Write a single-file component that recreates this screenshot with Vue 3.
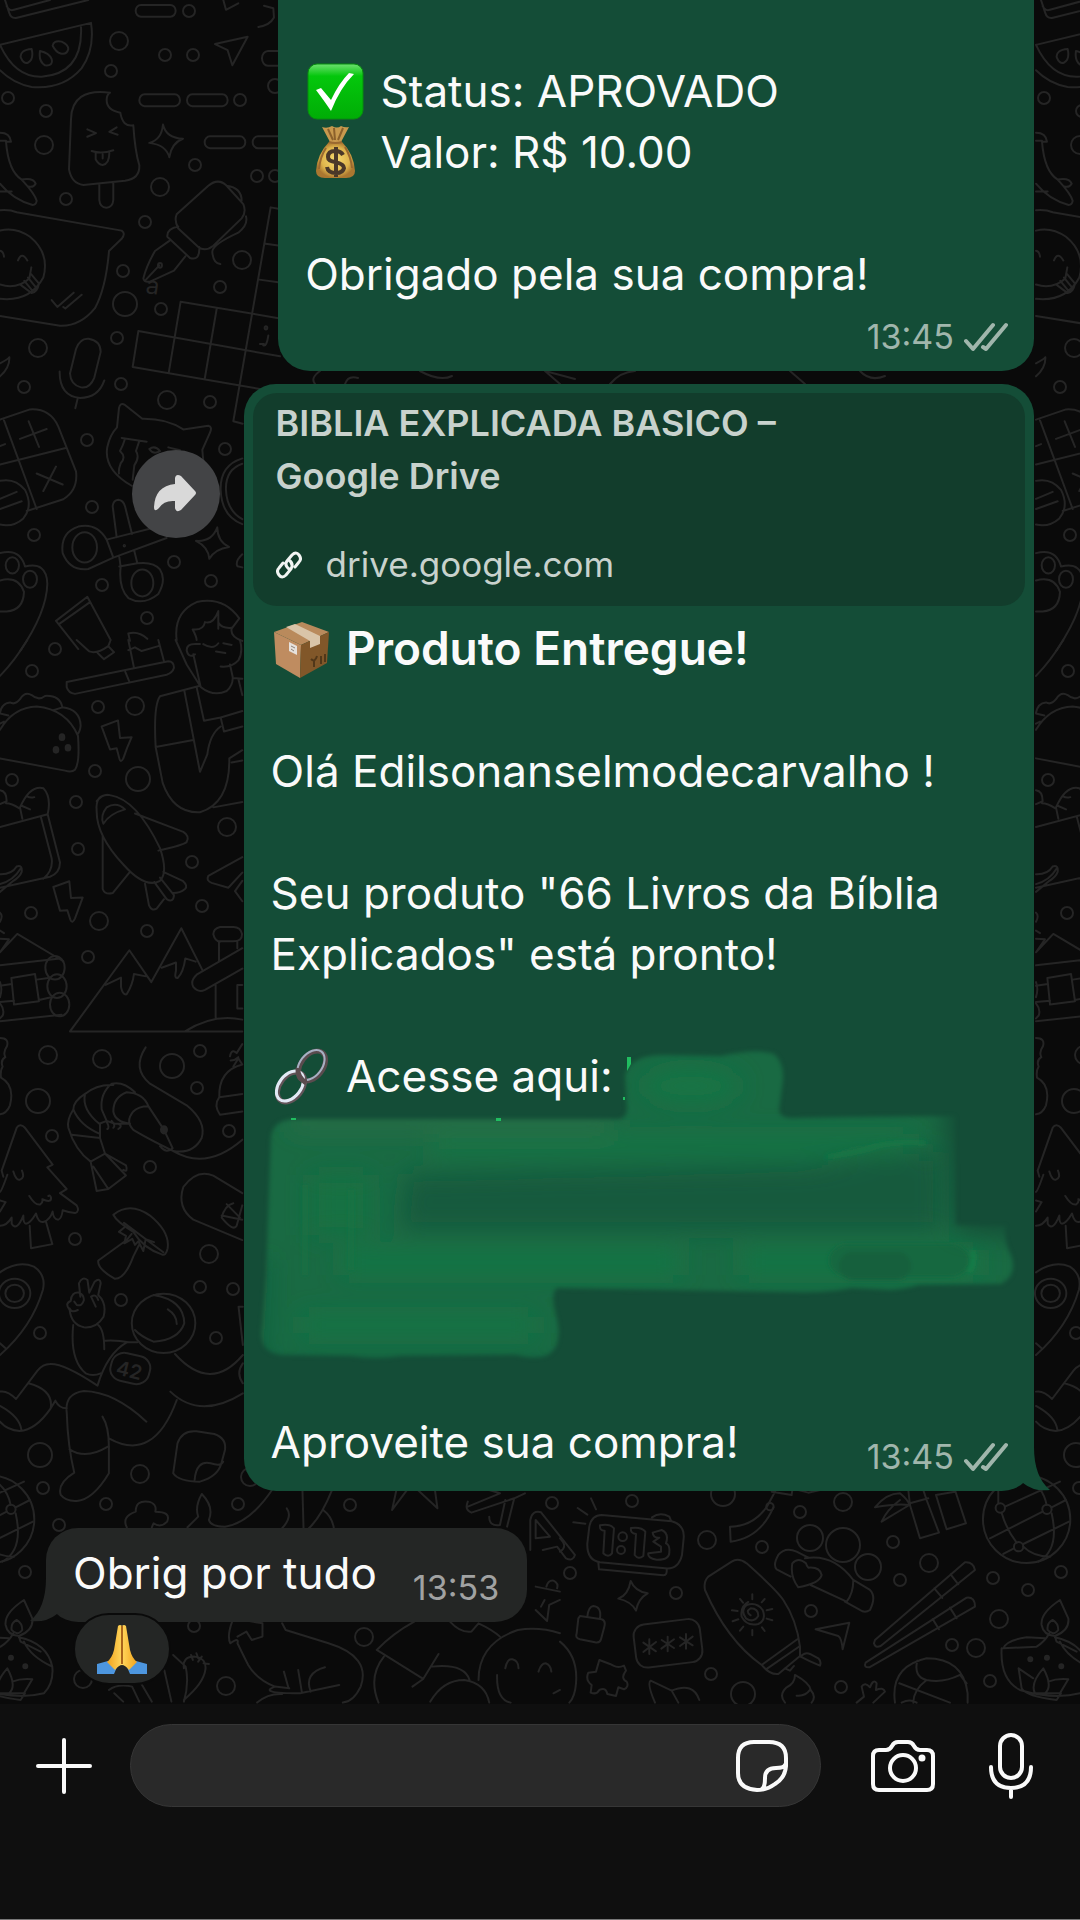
<template>
	<div class='page'>
		<main class='chat'>
			<svg class='wallpaper' aria-hidden='true'>
				<defs>
					<g id='doodles'>
						<circle v-for='(c, i) in dots' :key='i' :cx='c[0]' :cy='c[1]' :r='c[2] || 6' />
						<g transform='scale(.3333 .4082)'>
							<path d='M15 0L28 32Q32 45 48 44L265 0M20 15Q28 28 42 24L150 0M0 110L273 56Q285 120 245 167Q190 220 95 213Q40 205 0 172M0 110Q45 190 125 188Q250 180 243 65M95 120Q60 122 62 140Q70 158 85 153Q102 145 95 120ZM120 125Q115 150 135 160Q160 162 155 145Q148 130 120 125ZM158 112Q160 98 185 102Q205 110 205 120Q200 135 182 131Q168 128 158 112Z' />
							<path d='M330 227Q215 215 213 292L207 415Q215 450 250 453L375 443Q420 438 418 405Q405 370 400 307Q368 312 361 276Q320 270 320 245Q320 232 330 227M298 452V490Q300 508 319 509Q338 508 340 490V448M262 317L288 326L262 335M350 312L328 323L353 330M275 370Q305 378 340 368M287 375V390Q295 403 308 404Q328 402 328 375M308 378V388' />
							<rect x='407' y='12' width='120' height='29' rx='16' /><rect x='418' y='231' width='122' height='29' rx='16' /><rect x='561' y='231' width='122' height='29' rx='16' /><rect x='614' y='334' width='122' height='29' rx='16' /><rect x='758' y='334' width='122' height='29' rx='16' /><rect x='786' y='125' width='100' height='36' rx='18' />
							<path d='M645 108L743 90L697 160L683 123ZM670 0L678 24L715 8M792 14L820 20L822 43Q810 62 775 66M489 305Q498 338 549 340Q515 350 508 385Q498 355 448 350Q485 342 489 305ZM652 1292Q652 1325 687 1340Q645 1345 628 1369Q625 1340 588 1325Q635 1328 652 1292Z' />
							<path d='M0 325Q30 325 33 347H18Q25 420 65 440Q105 475 110 492Q108 502 98 502Q40 490 0 450M65 440Q100 435 107 450Q100 460 86 457M0 469H35M0 345H18' />
							<path d='M0 515Q30 513 50 520L365 565Q378 572 365 585L327 615Q318 705 285 755Q240 800 180 798L0 774M0 565Q45 555 90 580Q150 620 130 680Q90 740 0 732M0 614Q10 615 12 629M54 638Q65 615 82 638M0 697Q50 710 88 682L94 655M94 672L117 695Q112 715 95 718L62 698M84 680L106 702M73 688L97 712M155 735L172 752L221 717M190 752L196 756L245 722' />
							<path d='M530 525L625 455Q655 435 680 455L730 500Q740 520 725 535L640 602Q615 618 595 605L535 560Q522 540 530 525ZM535 555Q500 560 502 580L570 632Q600 640 598 605M508 590L465 615Q440 650 430 682Q432 692 450 690L522 663L556 628M438 685L478 650M680 455Q725 460 725 492M738 530Q745 550 715 570Q635 600 637 618Q640 645 661 647' />
							<path d='M415 811L398 899L780 953M542 739L506 914M415 811L840 873M542 739L840 780M650 757L614 929M812 508L700 1032L728 1038M812 508L840 512M797 597L840 602M778 685L840 692M790 846Q800 850 805 822M780 843H792' />
							<circle cx='480' cy='650' r='6' /><circle cx='798' cy='803' r='4' />
							<path d='M210 915L228 855Q240 828 266 830Q302 835 302 862L283 925Q270 952 243 949Q212 943 210 915ZM179 910Q178 970 240 975Q295 975 313 932M233 976L226 1000M0 890Q25 880 28 875Q30 900 0 922' />
							<path d='M0 1028L90 1003Q150 1000 175 1045L228 1155Q235 1200 190 1223L80 1252M12 1030L110 1247M0 1138L200 1097M60 1075L140 1051M86 1032L117 1095M110 1160L188 1187M168 1143L130 1203M0 1178Q45 1170 75 1200Q100 1240 70 1270Q40 1292 0 1285M0 1222L50 1205M0 1247L65 1228M0 1093L15 1088' />
							<path d='M395 1190Q310 1150 322 1095Q330 1065 351 1047L357 1000Q360 985 375 992L427 1026Q500 1025 550 1052L625 1043Q638 1045 630 1060L607 1102L610 1130M365 1073L440 1082M375 1075Q370 1090 360 1105Q380 1120 362 1135Q355 1150 357 1160M418 1080L408 1105Q420 1120 403 1140L398 1175M448 1100Q465 1090 480 1105Q460 1115 448 1100M505 1096L540 1103M727 1123Q660 1140 662 1200Q665 1265 727 1284M727 1136Q676 1150 678 1200Q680 1250 727 1272' />
							<circle cx='254' cy='1341' r='37' /><circle cx='427' cy='1428' r='33' /><circle cx='373' cy='1337' r='2' />
							<path d='M320 1322Q290 1280 235 1290Q180 1305 188 1355Q210 1400 265 1394L340 1366L320 1322L500 1285M340 1366L500 1318M350 1316L338 1240Q340 1225 355 1224Q370 1225 375 1240L396 1308M358 1365L362 1388Q355 1440 385 1465Q430 1485 475 1455Q500 1420 480 1395Q460 1375 412 1380L358 1388M403 1350L412 1380' />
							<circle cx='37' cy='1385' r='20' /><circle cx='90' cy='1419' r='21' />
							<path d='M0 1355Q60 1342 75 1388Q140 1375 142 1430Q140 1500 60 1595M0 1422Q55 1410 72 1450Q70 1495 20 1498H0M168 1521L262 1462L330 1565M168 1521L235 1590M180 1527L270 1475M727 1358Q705 1375 712 1387L727 1390M530 1568Q520 1500 590 1475Q670 1460 718 1515L695 1540Q690 1560 727 1570M655 1540V1497Q640 1530 615 1524Q610 1545 578 1542Q590 1560 590 1568M655 1525Q665 1540 695 1538M390 1570L385 1552Q415 1545 442 1565' />
						</g>
						<g transform='translate(0 640) scale(.3333 .4082)'>
							<path d='M82 0Q45 50 0 88M230 0L268 28Q290 35 325 15M332 0L325 15L342 30L312 47L293 32M385 0L402 68M475 0L492 52M385 25L405 18L425 27L475 15M200 103L505 52Q522 52 522 68Q518 80 500 85L225 132Q205 130 200 115ZM376 78L388 102M527 0L560 60L600 112M580 35L602 115Q640 140 680 125Q700 110 698 90L690 60M560 25Q560 10 585 10H600M560 25Q565 45 585 35M720 0Q730 30 715 50Q695 68 662 65M648 28L676 32M610 10Q640 25 655 8M670 8L695 12M700 93L727 95M600 112L480 138Q460 160 467 262L580 245M590 116L612 198L662 190M553 124L600 323L622 280Q630 230 662 212M467 262L488 350Q520 425 600 422Q690 400 688 290L727 270M662 190L727 174M662 190L672 224L727 212M640 410L727 397M695 300L727 295M715 95L727 135' />
							<path d='M0 220Q40 165 110 163Q200 170 234 235Q240 300 225 318Q215 325 195 320L0 290M0 178Q5 155 30 153Q45 160 60 145Q75 125 95 135Q115 150 135 137Q180 135 187 165Q240 170 242 210Q240 225 233 230M160 172L187 165M0 180L25 185M0 205L12 200' />
							<circle cx='186' cy='238' r='7' class='solid' /><circle cx='168' cy='269' r='7' class='solid' /><circle cx='204' cy='264' r='7' class='solid' />
							<path d='M305 212L354 197L360 240L395 238Q380 265 370 290Q362 303 358 290L350 265L330 268ZM160 605L208 591L213 632L248 631Q235 660 225 682Q217 697 211 685L202 662L180 663ZM0 458L143 427L180 545Q180 570 150 580L0 607M122 432L155 535Q160 565 130 585M60 410L67 438M60 410Q90 355 130 363Q155 385 143 427M82 383Q90 388 103 385M65 406L90 415M0 368Q20 370 20 395L0 402M18 400Q35 400 57 412M0 574Q35 575 50 555Q68 550 65 568Q60 580 40 590L0 617M0 598Q40 590 62 560' />
							<path d='M290 420Q285 375 330 380Q410 390 480 510Q505 570 480 590Q435 610 370 550Q290 480 290 420ZM290 395Q310 375 330 380M310 450Q300 430 320 410Q350 395 375 415Q330 425 310 450ZM405 425L550 470Q570 480 560 495Q550 503 475 516M308 480V610Q315 625 338 620L388 570M435 597L447 650Q455 665 470 658L492 635M490 568L548 590Q565 603 555 610Q540 620 520 620M463 593L500 635Q520 645 522 625L480 582' />
							<path d='M727 532L625 578Q618 590 635 595L685 607L727 570M727 590L705 615L727 640M0 668Q10 675 0 690M0 712L12 718M0 732L27 733L0 765L52 720L190 787M0 797L180 780M0 847L35 843M0 887L42 884M0 934L185 918M110 832L145 828M117 882L150 876M34 828L105 818L117 885L42 893ZM0 838Q8 855 0 875M0 890Q15 905 8 920L0 927' />
							<circle cx='165' cy='803' r='29' /><circle cx='171' cy='848' r='29' /><circle cx='179' cy='893' r='29' />
							<path d='M727 959H210L388 760L454 838L544 706L607 808M317 845L363 827V850Q368 870 380 868Q398 845 402 818L438 824M485 803L528 790V810Q522 830 533 828Q550 815 556 780L587 788M727 755L590 820Q570 835 580 850Q595 865 615 857L727 805M647 845V925M657 785V740M712 755V740M655 738H700Q727 738 726 720Q722 703 700 703H660Q640 707 640 721Q645 738 660 739M727 845H712V903H727M555 959Q640 915 727 930' />
							<path d='M0 975Q28 975 21 995Q8 1010 16 1022Q0 1030 8 1045Q0 1055 3 1072Q45 1090 30 1140Q20 1160 0 1162M10 1315L5 1300L50 1195Q60 1182 75 1195L158 1285L142 1292L200 1345L180 1355L230 1385Q240 1400 225 1404Q205 1402 188 1397Q185 1418 175 1420Q160 1420 158 1400Q150 1420 132 1425Q115 1430 108 1405Q90 1430 78 1430Q70 1430 70 1410Q50 1450 35 1430V1415Q20 1435 0 1435M22 1310Q5 1350 0 1352M0 1373L17 1377L0 1400M40 1302Q48 1325 60 1322Q75 1318 66 1300M88 1362Q105 1385 120 1383Q130 1378 127 1370Q155 1380 153 1366Q150 1358 145 1362M89 1435L93 1490L157 1480L138 1425' />
							<path d='M437 998Q395 1050 450 1087L560 1140Q620 1180 605 1220Q580 1260 520 1252Q440 1220 400 1200Q375 1180 400 1155Q415 1142 445 1142L492 1200L518 1245Q500 1260 480 1240M445 1142Q430 1110 380 1108Q340 1120 340 1155Q345 1180 390 1185M405 1108Q370 1080 335 1087Q300 1110 305 1150L320 1178M340 1090Q290 1088 255 1112Q245 1150 298 1185M255 1112Q220 1130 220 1150Q240 1190 300 1210M220 1150Q200 1175 205 1195Q225 1250 272 1278L315 1258L300 1220L215 1212M298 1185L320 1178L345 1185L385 1185M300 1185V1220M320 1180Q330 1195 322 1198M335 1178Q348 1190 340 1195M355 1185Q370 1190 355 1198M272 1278L290 1350L325 1345L378 1312L315 1258L378 1287Q385 1305 370 1298M280 1290L325 1345M520 1252Q620 1300 727 1224' />
							<circle cx='492' cy='1200' r='9' class='solid' />
							<path d='M727 1355L640 1312Q590 1295 550 1340Q530 1390 580 1420L727 1470M727 1040Q655 1055 658 1120L727 1112M658 1120Q640 1140 660 1163L727 1155M690 1020Q695 1000 710 1012L727 990M692 1030Q705 1030 715 1022M700 1045L715 1025L727 1040M700 1380Q675 1385 665 1415Q700 1450 710 1435L727 1385M680 1382L720 1415M665 1410L727 1420' />
							<path d='M340 1408Q390 1375 450 1410Q510 1450 503 1490Q498 1510 485 1505Q430 1490 400 1450Q350 1425 340 1408ZM372 1428L490 1500M372 1440L357 1450L378 1460L373 1478L397 1467L405 1482L415 1473L430 1497L437 1468L462 1475M395 1455L380 1470L295 1520Q290 1540 345 1565Q375 1565 400 1510L417 1482' />
						</g>
						<g transform='translate(0 1200) scale(.3571 .3333)'>
							<circle cx='41' cy='280' r='26' /><circle cx='41' cy='280' r='44' /><circle cx='458' cy='370' r='89' />
							<path d='M0 217Q50 180 95 200Q130 225 120 270Q90 380 0 465M0 430L18 447' />
							<path d='M225 290L221 250Q230 228 245 240L250 278L265 245Q280 232 282 250L275 285Q300 310 290 350Q270 385 235 382Q200 375 195 330Q180 310 198 303Q200 275 222 278Q235 285 235 300Q230 320 215 315L208 305M218 330Q200 340 195 325M255 290Q270 280 275 300M255 290L268 320M205 375Q195 480 240 520Q260 530 282 520M275 375Q292 390 292 448M295 422Q330 420 360 427H385M355 427Q300 460 273 557Q180 490 140 492Q120 492 105 512L45 597Q20 570 0 575M80 550Q150 570 142 625Q100 690 55 693Q20 690 0 665M0 618Q55 650 60 690M142 625L155 602Q165 625 187 625M410 665Q320 575 235 573Q180 580 187 640Q190 740 208 818Q160 850 170 885Q185 905 215 903Q260 900 305 820V740Q305 680 287 650M195 748Q240 780 302 740M305 715Q430 790 495 600M477 575Q560 660 680 580M490 462Q590 580 680 465M680 320H668L680 435M680 490Q660 520 680 550M430 285Q515 300 516 370Q500 420 430 425Q395 410 378 390M470 328Q495 345 495 372' />
							<rect x='310' y='463' width='110' height='85' rx='36' transform='rotate(14 365 505)' />
							<path d='M485 820L497 730Q510 690 550 694L600 702Q635 715 630 750L620 790Q610 830 560 845Q500 845 485 820ZM545 840Q550 780 590 790Q620 800 625 785' />
							<path d='M355 982Q340 950 380 935Q380 900 415 905Q440 910 435 935Q480 935 468 965Q450 985 430 970L425 982M525 982L555 950Q545 920 565 882Q600 920 585 960Q590 980 630 980Q700 970 765 865M847 870L850 985M930 870Q900 950 865 985M905 930Q930 950 935 985M803 925Q820 950 790 985M1098 930L1110 870M1098 930L1140 870M1170 870L1225 925L1218 870M1310 905Q1300 930 1320 938L1440 895L1420 980M1310 920L1400 880L1370 870M1370 950Q1370 980 1400 975L1415 900M1440 895L1470 880M1485 1050V960Q1490 930 1515 937L1610 1065Q1605 1085 1585 1075L1560 1040L1520 1050M1500 960V1015L1540 1010Z' />
							<path d='M485 1365L520 1400Q530 1450 515 1505M515 1405Q510 1370 545 1370Q580 1375 575 1410Q570 1450 515 1500M550 1360L555 1375M535 1365L540 1380M565 1370L555 1385M570 1390L585 1392M460 1410L480 1505M305 1470Q330 1450 370 1460L390 1505M320 1480L345 1505M395 1450L425 1505M650 1265Q635 1310 645 1330Q670 1310 665 1330Q690 1385 695 1395Q720 1440 770 1460L810 1465M665 1310L690 1295L705 1320L735 1310V1270L690 1262M790 1270L800 1290L920 1330Q1040 1370 1010 1460Q990 1505 960 1508M795 1415L808 1465M835 1410L845 1475M770 1460Q720 1480 840 1480L950 1455M910 1402Q850 1420 870 1475M720 1508Q750 1480 790 1482M1160 1265Q1100 1300 1055 1350L1185 1437L1228 1362M1075 1370Q1030 1430 1060 1508M1185 1437L1155 1460M1210 1400Q1300 1390 1315 1440M1205 1505Q1240 1440 1300 1440Q1360 1450 1370 1508M1260 1265Q1290 1300 1320 1295L1340 1270Q1380 1290 1400 1310M1568 1300Q1510 1280 1450 1290Q1340 1330 1340 1440M1415 1405Q1420 1375 1435 1378Q1452 1382 1452 1405M1508 1415Q1515 1390 1528 1390Q1542 1395 1544 1415M1392 1425Q1390 1500 1430 1508M1568 1470L1550 1480' />
							<path d='M1500 1160L1568 1175M1500 1230L1532 1263L1538 1215L1568 1200M1515 1220L1525 1200M1530 1160Q1535 1140 1550 1142Q1565 1150 1560 1165' />
						</g>
						<g transform='translate(560 1400) scale(.3333)'>
							<path d='M93 295L108 328M53 324L82 344M40 367L76 371M125 345L335 364Q375 375 371 415L366 465Q355 510 315 505L120 487Q80 480 82 430L88 380Q95 345 125 345ZM276 352Q300 335 328 350L333 362M115 488L117 508L310 526Q322 525 320 508' />
							<path d='M120 376Q118 392 134 392L130 460Q145 475 156 460L162 385Q150 370 120 376ZM213 384Q210 400 228 402L224 465Q235 480 250 468L256 395Q245 380 213 384ZM278 398Q280 415 298 413L280 425L303 440V455L265 460Q262 475 290 479Q330 480 328 455Q330 435 318 430Q328 400 305 390Z' />
							<circle cx='188' cy='410' r='13' /><circle cx='183' cy='450' r='12' />
							<path d='M212 543Q225 575 263 580Q235 595 228 632Q215 605 175 596Q205 585 212 543ZM60 648L125 658Q138 662 133 680L123 718Q120 730 105 727L60 718Q45 714 50 700L55 655ZM82 650Q85 620 100 618Q125 620 120 655M118 780L150 792L160 797Q175 805 192 797L198 812Q180 835 200 845Q208 860 192 868L175 862L168 888L142 882Q138 860 118 870Q110 885 92 878L95 855Q75 840 85 818L108 815ZM285 908Q260 850 272 842L335 872Q400 845 418 900M335 872L355 908M0 725Q55 770 48 850Q45 890 28 908M0 415Q25 440 0 455' />
							<rect x='224' y='665' width='200' height='130' rx='34' transform='rotate(-7 324 730)' />
							<path d='M268 718V762M250 728L288 754M288 726L250 756M323 710V754M305 720L342 744M342 718L304 746M378 702V746M360 712L398 736M398 710L360 738' />
							<path d='M445 530L515 485Q535 472 560 490Q650 570 670 600Q710 660 720 740V768L655 822Q630 825 605 795Q500 720 435 570Q430 545 445 530ZM605 795L712 718M618 808L720 738M722 770Q735 755 750 762L775 775Q785 785 780 797Q750 785 722 770M675 805L690 812L702 798M577 583V598M577 690V706M516 631L533 633M620 656L637 661M540 597L549 608M614 597L605 607M540 692L550 680M614 693L606 682M637 627L620 631M518 664L535 658M572 646Q555 635 572 625Q595 625 595 648Q580 670 558 655Q540 630 560 615Q590 605 608 630Q620 660 595 672Q560 680 545 650Q540 620 565 606' />
							<path d='M692 530L650 508Q638 495 655 465Q675 440 710 455L745 473M715 562Q690 530 697 490Q715 470 738 490Q740 498 745 503Q780 500 785 525Q780 550 715 562ZM735 475Q820 460 880 540Q880 580 860 605L752 555M880 540L930 570Q950 590 930 630Q915 640 900 630L855 605M645 275L622 318Q580 380 510 380L512 425Q600 415 640 322M635 275L695 285L697 270M715 270L745 278L780 270' />
							<circle cx='630' cy='320' r='11' />
							<path d='M767 688L868 668L848 748Q845 715 835 708ZM945 322Q980 280 1020 280Q1045 300 1048 315Q1010 310 945 322ZM965 365Q980 330 1020 300M965 365L1048 315M1045 270L1050 315L1080 415L1137 398L1100 300L1090 270M1050 310L1105 295M1128 285L1160 388L1218 370L1185 270M1128 285L1185 275' />
							<path d='M945 720L1215 487Q1240 485 1245 510L962 738Q945 745 942 730ZM1172 523L1195 553M1123 565L1147 594M917 788L1220 593Q1245 590 1245 620L928 802Q910 803 917 788ZM1170 623L1190 655M1118 657L1137 688' />
							<circle cx='1400' cy='358' r='131' /><circle cx='1321' cy='324' r='14' /><circle cx='1461' cy='328' r='14' /><circle cx='1376' cy='440' r='14' />
							<path d='M1335 320L1500 245M1475 322L1518 300M1290 415L1448 335M1390 432L1527 365M1330 462L1362 445M1315 270V310M1325 338Q1340 390 1370 428M1475 340Q1500 450 1435 485M1390 440Q1420 470 1470 470M1400 235Q1450 260 1460 315' />
							<path d='M1005 908Q990 800 1100 775Q1210 775 1223 880V908M1072 782Q1060 830 1100 840Q1150 850 1200 825L1220 850M1100 840Q1060 870 1060 908M1018 850L1170 908M1025 908Q1050 895 1070 908M890 908L912 890L905 860Q915 845 930 862Q940 835 950 850L948 870Q970 860 975 875L940 908M705 825Q750 850 752 870Q770 890 755 908M705 825Q705 850 680 862Q655 885 675 908M710 887Q735 890 750 870' />
							<path d='M1500 600Q1440 640 1445 675Q1450 705 1485 708Q1530 690 1525 655ZM1478 660Q1460 670 1463 690Q1480 710 1495 690Q1495 670 1478 660ZM1468 700Q1455 725 1430 740L1330 745Q1340 720 1400 712L1455 715M1485 710L1490 725L1550 755M1325 745Q1320 840 1380 870Q1480 900 1560 880M1376 805L1385 865Q1400 890 1490 900L1503 880M1376 805L1420 835M1450 805Q1410 850 1425 880H1455Q1480 860 1450 805ZM1525 838Q1490 835 1465 845M1525 838L1500 880L1455 880M1485 712Q1570 730 1585 800Q1590 850 1560 880M1500 725Q1520 770 1585 800' />
							<circle cx='1411' cy='778' r='6' class='solid' /><circle cx='1461' cy='773' r='6' class='solid' /><circle cx='1504' cy='799' r='6' class='solid' />
						</g>
						<text x='145' y='293' transform='rotate(8 145 293)'>a</text>
						<text x='115' y='1374' transform='rotate(14 115 1374)' class='tag'>42</text>
						<path d='M320 371Q310 378 315 384M345 384Q348 375 358 378M420 371Q440 382 452 376M560 384L545 371L575 379M610 384Q620 372 635 371M790 371L805 384M860 371Q870 382 885 376' />
					</g>
				</defs>
				<use href='#doodles' />
				<use href='#doodles' x='1036' />
				<use href='#doodles' x='-1036' />
			</svg>

			<section class='message sent'>
				<div class='bubble first'>
					<div class='text'>
						<p>
							<svg class='emoji' viewBox='0 0 57 57' role='img' aria-label='✅'>
								<defs><linearGradient id='check' x2='0' y2='1'><stop stop-color='#6de070' /><stop offset='.22' stop-color='#04c70c' /><stop offset='1' stop-color='#00ad06' /></linearGradient></defs>
								<rect x='1' y='1' width='55' height='55' rx='9' fill='url(#check)' stroke='#078e0e' />
								<path d='M9 27L14 25L24 37Q32 20 42 10L47 11Q33 25 24 48Q18 39 9 27Z' fill='#fff' />
							</svg>
							Status: APROVADO<br>
							<svg class='emoji' viewBox='0 0 57 57' role='img' aria-label='💰'>
								<defs><radialGradient id='bag'><stop stop-color='#f6db70' /><stop offset='.7' stop-color='#dfb54c' /><stop offset='1' stop-color='#ab7730' /></radialGradient></defs>
								<path d='M23 18L15 3Q20 5 25 2Q30 5 34 2Q38 4 42 3L34 18Z' fill='#c8994e' />
								<path d='M21 5L26 16M27 4L28 16M36 4L31 16' stroke='#8b602b' stroke-width='2' fill='none' />
								<path d='M22 18H35Q47 30 48 47Q48 54 39 54H18Q9 54 9 47Q10 30 22 18Z' fill='url(#bag)' />
								<path d='M22 18Q28 20 35 18M19 24Q13 33 12 45M38 23Q44 33 45 44' stroke='#9a6930' stroke-width='2' fill='none' />
								<path d='M36 31Q34 27 28 27Q21 27 21 33Q21 37 28 38Q37 40 37 44Q36 49 29 49Q21 49 20 43M29 23V53' stroke='#4a3829' stroke-width='4' fill='none' />
							</svg>
							Valor: R$ 10.00
						</p>
						<p>Obrigado pela sua compra!</p>
					</div>
					<div class='meta'>
						<time>13:45</time>
						<svg class='ticks' viewBox='0 0 44 30' aria-hidden='true'><path d='M2 19L9 27L29 3M19 25L22 27L42 3' /></svg>
					</div>
				</div>
			</section>

			<section class='message sent'>
				<button class='forward' type='button' aria-label='Encaminhar'>
					<svg viewBox='0 0 88 88'><path d='M43 34V28Q44 23 49 26L63 41Q65 43 63 45L49 60Q44 63 43 58V51Q32 50 27 58Q22 63 22 57Q23 36 43 34Z' /></svg>
				</button>
				<div class='bubble second'>
					<a class='preview' href='#'>
						<strong>BIBLIA EXPLICADA BASICO –<br>Google Drive</strong>
						<span class='host'>
							<svg viewBox='0 0 26 28' aria-hidden='true'><path d='M13 18Q8 14 11 10L16 4Q20 0 23 4Q26 8 23 11L19 16M13 9Q18 13 15 18L10 24Q6 28 3 24Q0 20 3 17L7 12' /></svg>
							drive.google.com
						</span>
					</a>
					<div class='text'>
						<p>
							<svg class='emoji' viewBox='0 0 57 57' role='img' aria-label='📦'>
								<path d='M1 11L29 1L56 11L28 24Z' fill='#b98a5c' />
								<path d='M1 11L28 24L27 57L3 43Z' fill='#bf8c60' />
								<path d='M28 24L56 11L54 42L27 57Z' fill='#815729' />
								<path d='M13 6L22 3L47 15V23L37 27V20Z' fill='#d9c4a8' />
								<path d='M16 21L24 25V34L16 30Z' fill='#e6e1dc' />
								<path d='M18 25L22 27M18 28L21 30' stroke='#8b8179' />
								<path d='M38 38Q42 42 44 35M41 39V46M48 35V43M52 33V41' stroke='#513719' stroke-width='2' fill='none' />
							</svg> <b>Produto Entregue!</b>
						</p>
						<p>Olá Edilsonanselmodecarvalho !</p>
						<p>Seu produto "66 Livros da Bíblia<br>Explicados" está pronto!</p>
						<div class='access'>
							<p>
								<svg class='emoji' viewBox='0 0 57 57' role='img' aria-label='🔗'>
									<g fill='none'>
										<ellipse cx='39' cy='18' rx='11' ry='17' transform='rotate(38 39 18)' stroke='#5a4b4e' stroke-width='5' />
										<ellipse cx='38' cy='17' rx='11' ry='17' transform='rotate(38 38 17)' stroke='#a7b0c3' stroke-width='2' />
										<ellipse cx='18' cy='39' rx='11' ry='17' transform='rotate(38 18 39)' stroke='#625459' stroke-width='5' />
										<ellipse cx='17' cy='38' rx='11' ry='17' transform='rotate(38 17 38)' stroke='#e2e9f5' stroke-width='3' />
										<path d='M25 20Q24 29 33 35' stroke='#5a4b4e' stroke-width='5' />
									</g>
								</svg>
								Acesse aqui:
							</p>
							<svg class='smudge' viewBox='0 0 800 340' aria-hidden='true'>
								<defs>
									<filter id='edge'><feGaussianBlur stdDeviation='2' /></filter>
									<filter id='soft' x='-50%' y='-150%' width='200%' height='400%'><feGaussianBlur stdDeviation='12' /></filter>
									<mask id='shape'>
										<path d='M42 89H362Q375 91 376 80L374 45Q380 24 415 25L470 26Q505 18 523 24Q533 32 532 50L528 80Q529 88 540 88L600 87L705 86V195H755Q752 210 760 225Q767 245 750 254L668 255Q655 259 640 260L600 258Q580 263 540 262L306 258Q299 263 305 285Q313 315 297 325Q285 330 265 325L150 326Q125 330 100 326L30 325Q6 322 11 295L15 245L20 105Q24 90 42 89Z' fill='#fff' filter='url(#edge)' />
										<path d='M688 40H820V212L705 200Z' fill='#000' filter='url(#soft)' />
									</mask>
								</defs>
								<g mask='url(#shape)'>
									<rect width='800' height='340' fill='#196a43' />
									<g filter='url(#soft)'>
										<rect x='40' y='88' width='320' height='10' fill='#356d4a' />
										<ellipse cx='440' cy='56' rx='50' ry='18' fill='#187444' />
										<rect x='180' y='105' width='480' height='20' fill='#177545' />
										<path d='M155 144Q350 140 560 136Q620 124 690 122V200H150Z' fill='#165a3c' />
										<rect x='60' y='145' width='60' height='60' fill='#197143' />
										<rect x='90' y='220' width='340' height='25' fill='#187645' />
										<rect x='490' y='220' width='240' height='25' fill='#187644' />
										<rect x='50' y='285' width='235' height='20' fill='#187544' />
										<path d='M14 230L8 340H310' stroke='#175a3c' stroke-width='8' fill='none' />
									</g>
									<g filter='url(#edge)'>
										<path d='M575 127Q610 122 625 116Q645 111 675 113' stroke='#177a47' stroke-width='3' fill='none' />
										<rect x='578' y='214' width='140' height='33' rx='20' fill='#196840' />
										<rect x='588' y='222' width='72' height='28' rx='14' fill='#17603d' />
										<path d='M54 155V245M100 160V240' stroke='#187245' stroke-width='3' />
										<path d='M722 220Q724 235 718 242' stroke='#198049' stroke-width='4' fill='none' />
									</g>
								</g>
								<path d='M376 27H380V34L376 41ZM372 67H374V70H372ZM245 88H250V91H245ZM40 88H45V90H40Z' fill='#20bd60' />
							</svg>
						</div>
					</div>
					<div class='closing text'>
						<p>Aproveite sua compra!</p>
						<div class='meta'>
							<time>13:45</time>
							<svg class='ticks' viewBox='0 0 44 30' aria-hidden='true'><path d='M2 19L9 27L29 3M19 25L22 27L42 3' /></svg>
						</div>
					</div>
					<svg class='tail' viewBox='0 0 34 44' aria-hidden='true'><path d='M0 34V0H18Q18 30 34 43Q18 45 7 36Z' /></svg>
				</div>
			</section>

			<section class='message received'>
				<div class='bubble incoming'>
					<p>Obrig por tudo</p>
					<div class='meta'><time>13:53</time></div>
					<svg class='tail' viewBox='0 0 34 44' aria-hidden='true'><path d='M34 34V0H16Q16 30 0 43Q16 45 27 36Z' /></svg>
				</div>
				<button class='reaction' type='button' aria-label='Reação 🙏'>
					<svg viewBox='0 0 50 50'>
						<defs><linearGradient id='hand'><stop stop-color='#f1a31f' /><stop offset='.5' stop-color='#ffd65b' /><stop offset='1' stop-color='#f3a41d' /></linearGradient></defs>
						<path d='M11 37L0 40V50H17L20 43ZM39 37L50 40V50H33L30 43Z' fill='#4d96df' />
						<path d='M21 2Q23 0 25 2Q27 0 29 2L33 26Q35 34 40 38L32 46Q28 41 25 41Q22 41 18 46L10 38Q15 34 17 26Z' fill='url(#hand)' />
						<path d='M25 2V40' stroke='#aa651b' stroke-width='2' />
					</svg>
				</button>
			</section>
		</main>

		<form class='composer' @submit.prevent>
			<button class='plus' type='button' aria-label='Anexar'>
				<svg viewBox='0 0 56 56'><path d='M28 2V54M2 28H54' /></svg>
			</button>
			<div class='field'>
				<input v-model='draft' type='text' aria-label='Mensagem'>
				<button class='sticker' type='button' aria-label='Figurinhas'>
					<svg viewBox='0 0 52 52'><path d='M18 2H33Q50 2 50 18V26Q49 38 39 44Q31 50 21 50Q2 49 2 33V18Q2 2 18 2ZM26 49Q29 47 29 38Q29 28 40 28Q48 28 49 25' /></svg>
				</button>
			</div>
			<button class='camera' type='button' aria-label='Câmera'>
				<svg viewBox='0 0 64 52'><path d='M8 10H15Q19 10 21 6Q23 2 27 2H37Q41 2 43 6Q45 10 49 10H56Q62 10 62 16V44Q62 50 56 50H8Q2 50 2 44V16Q2 10 8 10Z' /><circle cx='32' cy='28' r='13' /><circle cx='51' cy='18' r='1.5' class='dot' /></svg>
			</button>
			<button class='mic' type='button' aria-label='Gravar áudio'>
				<svg viewBox='0 0 44 66'><rect x='11' y='2' width='22' height='43' rx='11' /><path d='M2 34Q2 55 22 55Q42 55 42 34M22 55V64' /></svg>
			</button>
		</form>
	</div>
</template>

<script setup>
import { ref } from 'vue'

const draft = ref('')

// Wallpaper dots: x, y and radius (6 when left out)
const dots = [
  [189, 11], [119, 41, 9], [111, 71], [165, 55], [193, 55], [8, 98], [46, 111], [44, 145, 9],
  [240, 100], [195, 165], [160, 187, 9], [66, 199], [257, 176], [275, 86, 7], [275, 176],
  [145, 222], [242, 260, 9], [123, 271], [220, 287], [125, 304, 12], [161, 309], [117, 338],
  [38, 348, 9], [24, 387], [121, 384], [167, 400, 9], [210, 402], [87, 440], [225, 449],
  [92, 507], [34, 535], [174, 562], [102, 585], [211, 581], [147, 618],
  [55, 649], [32, 671], [98, 707], [135, 706, 9], [95, 771], [138, 779, 12], [12, 780],
  [76, 802], [78, 849], [227, 827, 9], [192, 862], [202, 906], [31, 913], [99, 921, 9],
  [147, 931], [88, 957], [48, 1055, 9], [102, 1059, 9], [172, 1066, 12], [200, 1051],
  [197, 1088], [38, 1101, 12], [52, 1136], [229, 1131], [150, 1167], [75, 1239], [209, 1254, 9],
  [200, 1287], [233, 1289], [121, 1300], [40, 1333], [216, 1338], [40, 1455, 12], [140, 1474, 9],
  [43, 1488], [106, 1504], [238, 1504], [59, 1525], [350, 1505], [552, 1503], [25, 1572],
  [194, 1626], [364, 1637, 9], [83, 1679, 9], [226, 1686, 9], [250, 1477, 9],
  [632, 1501], [843, 1502, 9], [800, 1512], [707, 1540, 9], [762, 1547], [570, 1573],
  [676, 1593], [810, 1538, 13], [843, 1545, 17], [868, 1567, 13], [893, 1542], [900, 1580],
  [929, 1563, 9], [993, 1578], [1028, 1590], [999, 1619, 9], [952, 1645], [976, 1648, 9],
  [811, 1611], [711, 1674], [743, 1694, 12], [841, 1687], [990, 1681], [723, 1494, 12]
]
</script>

<style>
body {
	margin: 0;
	background: #0f0f0f;
}
</style>

<style scoped>
.page {
	min-height: 100vh;
	display: flex;
	flex-direction: column;
	font-family: Inter, "Liberation Sans", sans-serif;
	color: #fafafa;
}

.page *, .page {
	box-sizing: border-box;
}

p {
	margin: 0;
}

button {
	padding: 0;
	border: 0;
	background: none;
	flex-shrink: 0;
}

button svg {
	display: block;
	width: 100%;
}

.chat {
	position: relative;
	flex: 1;
	overflow: hidden;
	padding: 0 46px 21px;
	background: #0a0a0a;
}

.wallpaper {
	position: absolute;
	left: 0;
	top: 0;
	width: 100%;
	height: 100%;
	fill: none;
	stroke: #252525;
	stroke-width: 2px;
	stroke-linecap: round;
	stroke-linejoin: round;
}

.wallpaper * {
	vector-effect: non-scaling-stroke;
}

.wallpaper .solid {
	fill: #252525;
}

.wallpaper text {
	font-size: 24px;
	stroke: none;
	fill: #252525;
}

.wallpaper .tag {
	font-size: 20px;
	font-weight: 600;
}

.message {
	position: relative;
	display: flex;
	align-items: flex-start;
}

.sent {
	justify-content: flex-end;
	gap: 24px;
}

.bubble {
	position: relative;
	border-radius: 32px;
	background: #144d37;
	padding-bottom: 18px;
	font-size: 44px;
	line-height: 61px;
}

.first {
	width: 76.5%;
	padding-top: 61px;
	border-radius: 0 0 32px 32px;
	margin-bottom: 13px;
}

.second {
	width: 80%;
	padding-top: 9px;
}

.text {
	padding: 0 26px 0 27px;
}

.text p + p {
	margin-top: 61px;
}

.emoji {
	width: 57px;
	height: 57px;
	margin: 0 4px 0 2px;
	vertical-align: -13px;
}

b {
	font-size: 46px;
	font-weight: 600;
}

.meta {
	display: flex;
	justify-content: flex-end;
	align-items: center;
	gap: 10px;
	font-size: 34px;
	line-height: 32px;
	color: #a0b6ac;
}

.first .meta {
	margin: 16px 26px 0 0;
}

.ticks {
	width: 44px;
	height: 30px;
	fill: none;
	stroke: #a0b6ac;
	stroke-width: 4px;
	stroke-linecap: round;
	stroke-linejoin: round;
}

.forward {
	width: 88px;
	height: 88px;
	margin-top: 66px;
	border-radius: 50%;
	background: #434446;
	fill: #d9d9d9;
}

.preview {
	display: block;
	margin: 0 9px 12px;
	padding: 4px 23px 15px;
	border-radius: 24px;
	background: #123d2c;
	color: #c8d2cd;
	font-size: 35px;
	line-height: 53px;
	text-decoration: none;
}

.preview strong {
	display: block;
	margin-bottom: 35px;
	font-size: 36px;
	font-weight: 600;
}

.host {
	display: flex;
	align-items: center;
	gap: 24px;
}

.host svg {
	width: 26px;
	height: 28px;
	fill: none;
	stroke: #f2f5f3;
	stroke-width: 3px;
	stroke-linecap: round;
}

.access {
	position: relative;
	margin-top: 61px;
}

/* lies over the address that follows the label */
.smudge {
	position: absolute;
	left: -20px;
	top: -16px;
	width: 800px;
	height: 340px;
}

.closing {
	display: flex;
	justify-content: space-between;
	align-items: flex-end;
	margin-top: 305px;
}

.tail {
	position: absolute;
	right: -16px;
	bottom: 0;
	width: 34px;
	height: 44px;
	fill: #144d37;
}

.received {
	flex-direction: column;
	margin-top: 37px;
}

.incoming {
	display: flex;
	align-items: flex-end;
	gap: 36px;
	padding: 15px 28px 18px 27px;
	background: #242625;
}

.incoming .meta {
	color: #a1a2a2;
}

.incoming .tail {
	left: -16px;
	fill: #242625;
}

.reaction {
	width: 98px;
	height: 72px;
	margin: -9px 0 -2px 27px;
	padding: 9px 22px 11px;
	border: 2px solid #0a0a0a;
	border-radius: 36px;
	background: #242625;
	z-index: 1;
}

.composer {
	display: flex;
	align-items: center;
	padding: 20px 47px 112px 36px;
	border-bottom: 1px solid #777;
	background: #0f0f0f;
}

.composer svg {
	fill: none;
	stroke: #fafafa;
	stroke-width: 4px;
	stroke-linecap: round;
	stroke-linejoin: round;
}

.plus {
	width: 56px;
}

.field {
	display: flex;
	align-items: center;
	flex: 1;
	min-width: 0;
	height: 83px;
	margin: 0 50px 0 38px;
	padding: 0 32px;
	border: 1px solid #363636;
	border-radius: 42px;
	background: #292929;
}

.field input {
	flex: 1;
	width: 100%;
	min-width: 0;
	border: 0;
	outline: 0;
	background: none;
	color: inherit;
	font: 44px Inter, sans-serif;
}

.sticker {
	width: 52px;
}

.camera {
	width: 64px;
	margin-right: 54px;
}

.dot {
	fill: #fafafa;
}

.mic {
	width: 44px;
}
</style>
